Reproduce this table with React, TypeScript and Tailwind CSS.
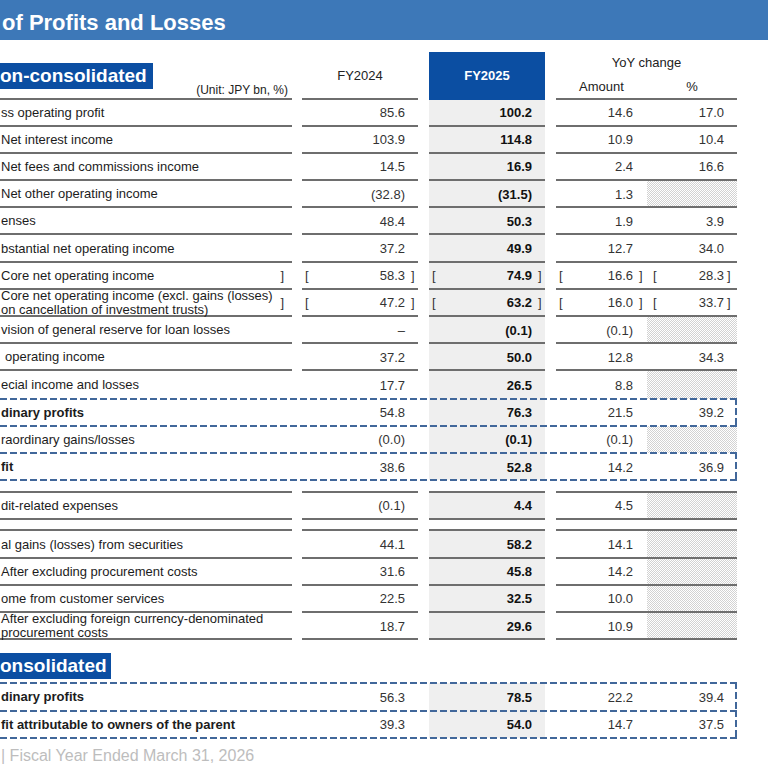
type Line = "b" | "none" | "tb";

type RowData = {
  label: string | string[];
  v24: string;
  v25: string;
  amt: string;
  pct?: string; // no pct -> dotted (n/a) cell
  bold?: boolean;
  bracket?: boolean;
  indent?: boolean;
};

const RULE = "border-[#6e6e6e]";
const DASH_H =
  "[background-image:repeating-linear-gradient(90deg,#41679a_0_7px,transparent_7px_10px)]";
const DASH_V =
  "[background-image:repeating-linear-gradient(180deg,#41679a_0_7px,transparent_7px_10px)]";
const DOTS =
  "[background-image:repeating-conic-gradient(#d2d2d2_0_25%,#ffffff_0_50%)] [background-size:2px_2px]";

const topRows: RowData[] = [
  { label: "ss operating profit", v24: "85.6", v25: "100.2", amt: "14.6", pct: "17.0" },
  { label: "Net interest income", v24: "103.9", v25: "114.8", amt: "10.9", pct: "10.4" },
  { label: "Net fees and commissions income", v24: "14.5", v25: "16.9", amt: "2.4", pct: "16.6" },
  { label: "Net other operating income", v24: "(32.8)", v25: "(31.5)", amt: "1.3" },
  { label: "enses", v24: "48.4", v25: "50.3", amt: "1.9", pct: "3.9" },
  { label: "bstantial net operating income", v24: "37.2", v25: "49.9", amt: "12.7", pct: "34.0" },
  { label: "Core net operating income", v24: "58.3", v25: "74.9", amt: "16.6", pct: "28.3", bracket: true },
  {
    label: ["Core net operating income (excl. gains (losses)", "on cancellation of investment trusts)"],
    v24: "47.2",
    v25: "63.2",
    amt: "16.0",
    pct: "33.7",
    bracket: true,
  },
  { label: "vision of general reserve for loan losses", v24: "–", v25: "(0.1)", amt: "(0.1)" },
  { label: "operating income", v24: "37.2", v25: "50.0", amt: "12.8", pct: "34.3", indent: true },
];

const securityRows: RowData[] = [
  { label: "After excluding procurement costs", v24: "31.6", v25: "45.8", amt: "14.2" },
  { label: "ome from customer services", v24: "22.5", v25: "32.5", amt: "10.0" },
  {
    label: ["After excluding foreign currency-denominated", "procurement costs"],
    v24: "18.7",
    v25: "29.6",
    amt: "10.9",
  },
];

function Row({ r, line = "b", h = "h-[27.2px]" }: { r: RowData; line?: Line; h?: string }) {
  const rule =
    line === "b" ? `border-b-2 ${RULE}` : line === "tb" ? `border-y-2 ${RULE}` : "";
  const cell = `${rule} flex items-center pt-[1.5px]`;
  const lines = Array.isArray(r.label) ? r.label : [r.label];

  return (
    <div className={`flex ${h} text-[13px]`}>
      <div className={`${cell} w-[292px] ${r.indent ? "pl-[5px]" : "pl-[1px]"}`}>
        <div
          className={`flex-1 whitespace-nowrap leading-[14.5px] text-[#1c1c1c] ${
            r.bold ? "font-bold" : ""
          }`}
        >
          {lines.map((t) => (
            <div key={t}>{t}</div>
          ))}
        </div>
        {r.bracket && <span className="pr-[8px] text-[#333]">]</span>}
      </div>

      <div className={`${cell} ml-[10px] w-[116px] text-[#333]`}>
        {r.bracket && <span className="pl-[3px]">[</span>}
        <span className="flex-1 text-right">{r.v24}</span>
        <span className="w-[13px] pl-[6px]">{r.bracket ? "]" : ""}</span>
      </div>

      <div className={`${cell} ml-[11px] w-[116px] bg-[#efefef] text-[#111]`}>
        {r.bracket && <span className="pl-[3px] text-[#333]">[</span>}
        <span className="flex-1 text-right font-bold">{r.v25}</span>
        <span className="w-[13px] pl-[6px] text-[#333]">{r.bracket ? "]" : ""}</span>
      </div>

      <div className={`${rule} ml-[11px] flex w-[181px] text-[#333]`}>
        <div className="flex w-[91px] items-center pt-[1.5px]">
          {r.bracket && <span className="pl-[3px]">[</span>}
          <span className="flex-1 text-right">{r.amt}</span>
          <span className="w-[14px] pl-[6px]">{r.bracket ? "]" : ""}</span>
        </div>
        {r.pct ? (
          <div className="flex w-[90px] items-center pt-[1.5px]">
            {r.bracket && <span className="pl-[6px]">[</span>}
            <span className="flex-1 text-right">{r.pct}</span>
            <span className="w-[13px] pl-[3px]">{r.bracket ? "]" : ""}</span>
          </div>
        ) : (
          <div className={`w-[90px] ${DOTS}`} />
        )}
      </div>
    </div>
  );
}

// blue dashed frame drawn over a row; left side runs off the slide
function Dashed({ children }: { children: React.ReactNode }) {
  return (
    <div className="relative">
      {children}
      <div className="pointer-events-none absolute -top-px -bottom-px left-0 right-0">
        <div className={`absolute left-0 right-0 top-0 h-[2px] ${DASH_H}`} />
        <div className={`absolute bottom-0 left-0 right-0 h-[2px] ${DASH_H}`} />
        <div className={`absolute bottom-0 right-0 top-0 w-[2px] ${DASH_V}`} />
      </div>
    </div>
  );
}

function SectionTag({ text, pr }: { text: string; pr: string }) {
  return (
    <div className={`h-[26px] bg-[#0b4ea2] ${pr} text-[19px] font-bold leading-[26px] text-white`}>
      {text}
    </div>
  );
}

export default function App() {
  return (
    <div className="h-[768px] w-[768px] overflow-hidden bg-white font-['Liberation_Sans',Arial,sans-serif]">
      <div className="flex h-[40px] items-center bg-[#3d78b8] pl-[2px] pt-[5px] text-[22px] font-bold text-white">
        of Profits and Losses
      </div>

      <div className="w-[737px]">
        {/* column headers */}
        <div className="flex h-[59.5px]">
          <div className={`flex w-[292px] items-end justify-between border-b-2 ${RULE}`}>
            <div className="mb-[8.5px]">
              <SectionTag text="on-consolidated" pr="pr-[6px]" />
            </div>
            <div className="mb-[0.5px] mr-[4px] text-[12px] leading-[14px] text-[#222]">
              (Unit: JPY bn, %)
            </div>
          </div>
          <div
            className={`ml-[10px] flex w-[116px] flex-col justify-end border-b-2 ${RULE} pb-[15px] text-center text-[13px] leading-[15px] text-[#222]`}
          >
            FY2024
          </div>
          <div className="ml-[11px] mt-[12px] flex w-[116px] items-center justify-center bg-[#0b4ea2] text-[13px] font-bold text-white">
            FY2025
          </div>
          <div
            className={`ml-[11px] flex w-[181px] flex-col border-b-2 ${RULE} pt-[15px] text-[13px] leading-[15px] text-[#222]`}
          >
            <div className="text-center">YoY change</div>
            <div className="mt-[9px] flex">
              <div className="w-[91px] text-center">Amount</div>
              <div className="w-[90px] text-center">%</div>
            </div>
          </div>
        </div>

        {topRows.map((r) => (
          <Row key={String(r.label)} r={r} />
        ))}
        <Row r={{ label: "ecial income and losses", v24: "17.7", v25: "26.5", amt: "8.8" }} line="none" />
        <Dashed>
          <Row
            r={{ label: "dinary profits", v24: "54.8", v25: "76.3", amt: "21.5", pct: "39.2", bold: true }}
            line="none"
          />
        </Dashed>
        <Row r={{ label: "raordinary gains/losses", v24: "(0.0)", v25: "(0.1)", amt: "(0.1)" }} line="none" />
        <Dashed>
          <Row r={{ label: "fit", v24: "38.6", v25: "52.8", amt: "14.2", pct: "36.9", bold: true }} line="none" />
        </Dashed>

        <div className="mt-[10.5px]">
          <Row r={{ label: "dit-related expenses", v24: "(0.1)", v25: "4.4", amt: "4.5" }} line="tb" h="h-[29.3px]" />
        </div>

        <div className="mt-[9.4px]">
          <Row
            r={{ label: "al gains (losses) from securities", v24: "44.1", v25: "58.2", amt: "14.1" }}
            line="tb"
            h="h-[29.4px]"
          />
          {securityRows.map((r) => (
            <Row key={String(r.label)} r={r} />
          ))}
        </div>

        <div className="mt-[12.5px] flex">
          <SectionTag text="onsolidated" pr="pr-[4px]" />
        </div>

        <div className="mt-[4px]">
          <Dashed>
            <Row
              r={{ label: "dinary profits", v24: "56.3", v25: "78.5", amt: "22.2", pct: "39.4", bold: true }}
              line="none"
              h="h-[27.8px]"
            />
          </Dashed>
          <Dashed>
            <Row
              r={{
                label: "fit attributable to owners of the parent",
                v24: "39.3",
                v25: "54.0",
                amt: "14.7",
                pct: "37.5",
                bold: true,
              }}
              line="none"
              h="h-[27.8px]"
            />
          </Dashed>
        </div>

        <div className="mt-[8.4px] pl-[1px] text-[16px] leading-[18px] text-[#bdbdbd]">
          | Fiscal Year Ended March 31, 2026
        </div>
      </div>
    </div>
  );
}
